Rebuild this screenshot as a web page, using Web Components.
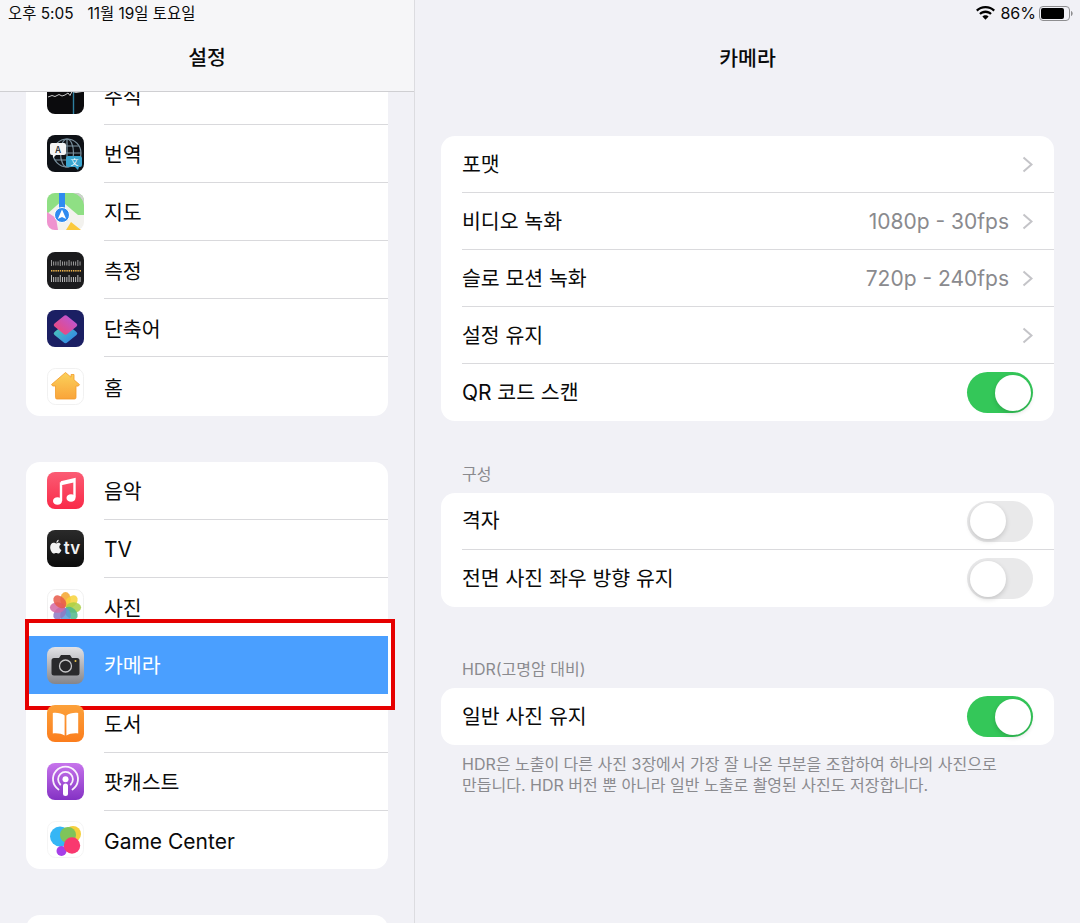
<!DOCTYPE html>
<html lang="ko">
<head>
<meta charset="utf-8">
<title>카메라 설정</title>
<style>
  html, body {
    margin: 0;
    height: 923px;
    overflow: hidden;
    background: #f1f1f6;
    font-family: Inter, "Noto Sans CJK KR", sans-serif;
    color: #0a0a0a;
  }
</style>
</head>
<body>
<ipad-layout>
  <settings-sidebar slot="side">
    <sidebar-group>
      <sidebar-row icon="stocks">주식</sidebar-row>
      <sidebar-row icon="translate">번역</sidebar-row>
      <sidebar-row icon="maps">지도</sidebar-row>
      <sidebar-row icon="measure">측정</sidebar-row>
      <sidebar-row icon="shortcuts">단축어</sidebar-row>
      <sidebar-row icon="home" last>홈</sidebar-row>
    </sidebar-group>
    <sidebar-group>
      <sidebar-row icon="music">음악</sidebar-row>
      <sidebar-row icon="tv" latin>TV</sidebar-row>
      <sidebar-row icon="photos">사진</sidebar-row>
      <sidebar-row icon="camera" selected>카메라</sidebar-row>
      <sidebar-row icon="books">도서</sidebar-row>
      <sidebar-row icon="podcasts">팟캐스트</sidebar-row>
      <sidebar-row icon="gamecenter" latin last>Game Center</sidebar-row>
    </sidebar-group>
    <sidebar-group>
      <sidebar-row icon="blank" last></sidebar-row>
    </sidebar-group>
  </settings-sidebar>

  <camera-pane slot="main">
    <settings-card>
      <settings-row chevron>포맷</settings-row>
      <settings-row value="1080p - 30fps" chevron>비디오 녹화</settings-row>
      <settings-row value="720p - 240fps" chevron>슬로 모션 녹화</settings-row>
      <settings-row chevron>설정 유지</settings-row>
      <settings-row toggle="on" last><span style="font-size:21px">QR</span> 코드 스캔</settings-row>
    </settings-card>
    <settings-card label="구성" gap="43">
      <settings-row toggle="off">격자</settings-row>
      <settings-row toggle="off" last>전면 사진 좌우 방향 유지</settings-row>
    </settings-card>
    <settings-card label="HDR(고명암 대비)" gap="52"
      note="HDR은 노출이 다른 사진 3장에서 가장 잘 나온 부분을 조합하여 하나의 사진으로 만듭니다. HDR 버전 뿐 아니라 일반 노출로 촬영된 사진도 저장합니다.">
      <settings-row toggle="on" last>일반 사진 유지</settings-row>
    </settings-card>
  </camera-pane>
</ipad-layout>

<script>
const measureTicks = () => {
    let out = '';
    for (let x = 4; x <= 33; x += 2.2) {
        const i = Math.round((x - 4) / 2.2);
        out += `<rect x="${x}" y="${i % 4 === 0 ? 8 : 9.5}" width=".9" height="${i % 4 === 0 ? 6 : 4}" fill="#a8a8a8"/>`;
        out += `<rect x="${x}" y="${i % 4 === 0 ? 23 : 25}" width=".9" height="${i % 4 === 0 ? 7 : 5}" fill="#d0d0d0"/>`;
        out += `<rect x="${x}" y="18" width="1.4" height="1.6" fill="#e9b04a"/>`;
    }
    return out;
};

const photoPetals = () => {
    const colors = ['#f4a52c', '#f7d23a', '#a9cf45', '#4fb98a', '#5b9bd8', '#8c78c4', '#d468a5', '#e85a4a'];
    return colors.map((c, i) =>
        `<ellipse cx="18.5" cy="10.5" rx="5.2" ry="7.6" fill="${c}" fill-opacity=".85" transform="rotate(${i * 45} 18.5 18.5)"/>`
    ).join('');
};

const ICONS = {
    stocks: `
      <rect width="37" height="37" rx="8" fill="#0b0b0d"/>
      <path d="M26.500 0v37" stroke="#2e7f9f" stroke-width="1.400"/>
      <path d="M1 20l4-1.500 3 1 4-2 3 1.500 3-1 3-2 2 2.500 2-4 4 1 6-1" fill="none" stroke="#e2e2e2" stroke-width=".9"/>`,
    translate: `
      <rect width="37" height="37" rx="8" fill="#0e1116"/>
      <g fill="none" stroke="#7d93a0" stroke-width="1.200">
        <circle cx="20" cy="18" r="14"/>
        <ellipse cx="20" cy="18" rx="6.500" ry="14"/>
        <path d="M20 4v28M6 18h28M8 11h24M8 25h24"/>
      </g>
      <path d="M5 8h12a2 2 0 0 1 2 2v8a2 2 0 0 1-2 2H9l-3 3v-3H5a2 2 0 0 1-2-2v-8a2 2 0 0 1 2-2z" fill="#f4f4f4"/>
      <text x="11" y="17.500" font-size="9" font-weight="500" text-anchor="middle" fill="#222">A</text>
      <path d="M21 21h12a2 2 0 0 1 2 2v7a2 2 0 0 1-2 2h-1l-1 3-3-3h-7a2 2 0 0 1-2-2v-7a2 2 0 0 1 2-2z" fill="#3aa5cf"/>
      <text x="27.500" y="30" font-size="8" text-anchor="middle" fill="#fff">文</text>`,
    maps: `
      <rect width="37" height="37" rx="8" fill="#f3f2ee"/>
      <path d="M8 0h4.500v10L0 21V8a8 8 0 0 1 8-8z" fill="#8fdf84"/>
      <path d="M18 0h11a8 8 0 0 1 8 8v14h-6L18 11z" fill="#8fdf84"/>
      <path d="M26 0h3a8 8 0 0 1 8 8v4A14 14 0 0 0 26 0z" fill="#cfcfcf"/>
      <path d="M0 19l9 6 2 12H8a8 8 0 0 1-8-8z" fill="#ef93cf"/>
      <path d="M19 37l5-8 10 8z" fill="#fbc93c"/>
      <rect x="12" y="0" width="6" height="17" fill="#2f8bf0"/>
      <circle cx="15" cy="22" r="7.500" fill="#2f8bf0" stroke="#fff" stroke-width="1"/>
      <path d="M15 16.500l4.200 9.500-4.200-2-4.200 2z" fill="#fff"/>`,
    measure: `
      <rect width="37" height="37" rx="8" fill="#1b1b1d"/>${measureTicks()}`,
    shortcuts: `
      <defs>
        <linearGradient id="s1" x1="0" y1="1" x2="1" y2="0">
          <stop offset="0" stop-color="#f4476a"/><stop offset="1" stop-color="#b458e6"/>
        </linearGradient>
        <linearGradient id="s2" x1="0" y1="0" x2="1" y2="1">
          <stop offset="0" stop-color="#4fd0b0"/><stop offset="1" stop-color="#2f7df0"/>
        </linearGradient>
      </defs>
      <rect width="37" height="37" rx="8" fill="#1b1f63"/>
      <path d="M16.500 14.700a3 3 0 0 1 4 0L29.500 22a2 2 0 0 1 0 3L20.500 32.300a3 3 0 0 1-4 0L7.500 25a2 2 0 0 1 0-3z" fill="url(#s2)"/>
      <path d="M16.500 6.200a3 3 0 0 1 4 0L29.500 13.500a2 2 0 0 1 0 3L20.500 23.800a3 3 0 0 1-4 0L7.500 16.500a2 2 0 0 1 0-3z" fill="url(#s1)"/>`,
    home: `
      <defs>
        <linearGradient id="h" x1="0" y1="0" x2="0" y2="1">
          <stop offset="0" stop-color="#fbd15a"/><stop offset="1" stop-color="#f9a43a"/>
        </linearGradient>
      </defs>
      <rect x=".5" y=".5" width="36" height="36" rx="8" fill="#fff" stroke="#f1f1f1"/>
      <path d="M18.500 4.500l5.500 4.700V6.500h3v5.300l5.500 4.800-1.200 1.500h-2.300v11.400a1.500 1.500 0 0 1-1.500 1.500H10a1.500 1.500 0 0 1-1.500-1.500V18H5.700l-1.200-1.500z" fill="url(#h)" stroke="#f39a2a" stroke-width=".8"/>`,
    music: `
      <defs>
        <linearGradient id="m" x1="0" y1="0" x2="0" y2="1">
          <stop offset="0" stop-color="#fb5c74"/><stop offset="1" stop-color="#f92a48"/>
        </linearGradient>
      </defs>
      <rect width="37" height="37" rx="8" fill="url(#m)"/>
      <path d="M14 10.300l13.500-3v18.200" fill="none" stroke="#fff" stroke-width="2.400"/>
      <path d="M14 10.300v18.700M14 12l13.500-3" fill="none" stroke="#fff" stroke-width="2.400"/>
      <ellipse cx="10.500" cy="29" rx="4.500" ry="3.800" fill="#fff"/>
      <ellipse cx="24" cy="26" rx="4.500" ry="3.800" fill="#fff"/>`,
    tv: `
      <defs>
        <linearGradient id="t" x1="0" y1="0" x2="0" y2="1">
          <stop offset="0" stop-color="#2a2a2a"/><stop offset="1" stop-color="#0c0c0c"/>
        </linearGradient>
      </defs>
      <rect width="37" height="37" rx="8" fill="url(#t)"/>
      <g transform="translate(-1.500 -3.200) scale(1.200)">
        <path d="M11.300 13.300c-.9 0-1.500.6-2.300.6s-1.300-.6-2.200-.6c-1.600 0-2.900 1.500-2.900 3.700 0 2.600 1.700 5.300 3.100 5.300.7 0 1-.4 1.900-.4s1.200.4 1.900.4c1 0 2-1.500 2.500-2.900-2.200-1-2.300-3.800-.4-4.800-.5-.8-1.500-1.300-1.600-1.300z" fill="#f2f2f2"/>
        <path d="M9 13.200c0-1.200.9-2.300 2-2.500.1 1.300-.9 2.400-2 2.500z" fill="#f2f2f2"/>
      </g>
      <text x="25" y="24" font-size="17" font-weight="600" text-anchor="middle" fill="#f2f2f2" font-family="Inter, sans-serif">tv</text>`,
    photos: `
      <rect x=".5" y=".5" width="36" height="36" rx="8" fill="#fff" stroke="#f1f1f1"/>${photoPetals()}`,
    camera: `
      <defs>
        <linearGradient id="c" x1="0" y1="0" x2="0" y2="1">
          <stop offset="0" stop-color="#e3e3e6"/><stop offset="1" stop-color="#85858a"/>
        </linearGradient>
      </defs>
      <rect width="37" height="37" rx="8" fill="url(#c)"/>
      <path d="M7 11h5l2-3h9l2 3h5a2.500 2.500 0 0 1 2.500 2.500V26a2.500 2.500 0 0 1-2.500 2.500H7A2.500 2.500 0 0 1 4.500 26V13.500A2.500 2.500 0 0 1 7 11z" fill="#2a2a2c"/>
      <circle cx="18.500" cy="19" r="6" fill="#27272a" stroke="#c6c6c8" stroke-width="1.300"/>
      <circle cx="28.500" cy="14" r="1" fill="#e9c34a"/>`,
    books: `
      <defs>
        <linearGradient id="b" x1="0" y1="0" x2="0" y2="1">
          <stop offset="0" stop-color="#fca13a"/><stop offset="1" stop-color="#fb7d1d"/>
        </linearGradient>
      </defs>
      <rect width="37" height="37" rx="8" fill="url(#b)"/>
      <path d="M17.600 10.500C15 8.300 10 7.500 5.800 8v20.500c4.500-.5 8.800.2 11.800 2z" fill="#fff"/>
      <path d="M19.400 10.500C22 8.300 27 7.500 31.200 8v20.500c-4.500-.5-8.800.2-11.800 2z" fill="#fff"/>`,
    podcasts: `
      <defs>
        <linearGradient id="p" x1="0" y1="0" x2="0" y2="1">
          <stop offset="0" stop-color="#c774ec"/><stop offset="1" stop-color="#8432c4"/>
        </linearGradient>
      </defs>
      <rect width="37" height="37" rx="8" fill="url(#p)"/>
      <g fill="none" stroke="#fff" stroke-width="1.800" stroke-linecap="round" opacity=".92">
        <path d="M11.500 26.500a12.500 12.500 0 1 1 14 0"/>
        <path d="M13.300 21.500a7.400 7.400 0 1 1 10.400 0"/>
      </g>
      <circle cx="18.500" cy="16.300" r="3" fill="#fff"/>
      <rect x="16" y="20.500" width="5" height="12.500" rx="2.500" fill="#fff"/>`,
    gamecenter: `
      <rect x=".5" y=".5" width="36" height="36" rx="8" fill="#fff" stroke="#f5f5f5"/>
      <circle cx="13" cy="15.500" r="10" fill="#35b6f5"/>
      <circle cx="26" cy="13" r="8" fill="#f5cf3c"/>
      <circle cx="14.500" cy="30" r="5" fill="#a63fe8"/>
      <circle cx="21" cy="14" r="8" fill="#7fc45a"/>
      <circle cx="25" cy="24.500" r="8.200" fill="#f9386f"/>`,
    blank: `<rect x=".5" y=".5" width="36" height="36" rx="8" fill="#fff"/>`,
};

class AppIcon extends HTMLElement {
    constructor() {
        super();
        this.attachShadow({ mode: 'open' });
    }

    connectedCallback() {
        const name = this.getAttribute('name');
        this.shadowRoot.innerHTML = `
      <style>
        :host { display: block; width: 37px; height: 37px; flex: none; }
        svg { display: block; font-family: "Noto Sans CJK KR", sans-serif; }
      </style>
      <svg width="37" height="37" viewBox="0 0 37 37">${ICONS[name] || ''}</svg>
    `;
    }
}

class IpadLayout extends HTMLElement {
    constructor() {
        super();
        this.attachShadow({ mode: 'open' });
        this.shadowRoot.innerHTML = `
      <style>
        :host { display: grid; grid-template-columns: 415px 665px; height: 923px; }
      </style>
      <slot name="side"></slot>
      <slot name="main"></slot>
    `;
    }
}

class SettingsSidebar extends HTMLElement {
    constructor() {
        super();
        this.attachShadow({ mode: 'open' });
        this.shadowRoot.innerHTML = `
      <style>
        :host {
          display: flex;
          flex-direction: column;
          height: 923px;
          overflow: hidden;
          border-right: 1px solid #dcdce0;
          box-sizing: border-box;
        }
        header {
          flex: none;
          height: 92px;
          box-sizing: border-box;
          background: #f6f6f8;
          border-bottom: 1px solid #cfcfd2;
          position: relative;
          z-index: 2;
        }
        .status {
          display: flex;
          gap: 14px;
          padding: 4px 0 0 8px;
          font-size: 15.4px;
          line-height: 20px;
        }
        h1 {
          margin: 19px 0 0;
          font-size: 20.5px;
          line-height: 30px;
          font-weight: 500;
          text-align: center;
        }
        .list { flex: 1; min-height: 0; margin-top: -25.5px; padding: 0 26px; display: flex; flex-direction: column; gap: 46px; }
      </style>
      <header>
        <div class="status"><span>오후 5:05</span><span>11월 19일 토요일</span></div>
        <h1>설정</h1>
      </header>
      <div class="list"><slot></slot></div>
    `;
    }
}

class SidebarGroup extends HTMLElement {
    constructor() {
        super();
        this.attachShadow({ mode: 'open' });
        this.shadowRoot.innerHTML = `
      <style>
        :host { display: block; flex: none; background: #fff; border-radius: 14px; }
      </style>
      <slot></slot>
    `;
    }
}

class SidebarRow extends HTMLElement {
    constructor() {
        super();
        this.attachShadow({ mode: 'open' });
    }

    connectedCallback() {
        const icon = this.getAttribute('icon');
        this.shadowRoot.innerHTML = `
      <style>
        :host {
          display: block;
          height: 58.2px;
          position: relative;
        }
        .row { display: flex; align-items: center; height: 100%; padding-left: 21px; position: relative; z-index: 1; }
        .label {
          flex: 1;
          height: 100%;
          margin-left: 20px;
          display: flex;
          align-items: center;
          font-size: 20.5px;
          box-sizing: border-box;
          border-bottom: 1px solid #d9d9dc;
        }
        :host([last]) .label { border-bottom: 0; }
        :host([latin]) .label { font-size: 21px; padding-top: 3px; }

        /* 빨간 강조 박스 */
        :host([selected]) { z-index: 1; }
        :host([selected]) .row { margin-left: 3px; padding-left: 18px; background: #4a9fff; }
        :host([selected]) .label { color: #fff; border-bottom: 0; padding-bottom: 2px; }
        :host([selected])::before {
          content: "";
          position: absolute;
          top: -17px;
          bottom: -16px;
          left: -1px;
          right: -7px;
          background: #fff;
          border: 4px solid #e60000;
        }
      </style>
      <div class="row">
        <app-icon name="${icon}"></app-icon>
        <div class="label"><slot></slot></div>
      </div>
    `;
    }
}

class CameraPane extends HTMLElement {
    constructor() {
        super();
        this.attachShadow({ mode: 'open' });
        this.shadowRoot.innerHTML = `
      <style>
        :host { display: block; padding: 0 26px; }
        .status {
          display: flex;
          justify-content: flex-end;
          align-items: center;
          gap: 5px;
          height: 26px;
          margin-right: -19px;
          font-size: 16px;
        }
        .status span { margin: 0 -2px 0 0; }
        h2 {
          margin: 18px 0 0;
          font-size: 20.5px;
          line-height: 30px;
          font-weight: 500;
          text-align: center;
        }
        .content { padding-top: 62px; }
      </style>
      <div class="status">
        <svg width="19" height="14" viewBox="0 0 19 14">
          <path d="M9.500 0C5.800 0 2.500 1.400 0 3.800l1.600 1.700C3.600 3.500 6.400 2.300 9.500 2.300s5.900 1.200 7.900 3.200L19 3.800C16.500 1.400 13.200 0 9.500 0z"/>
          <path d="M9.500 4.600c-2.400 0-4.600.9-6.300 2.600l1.600 1.600c1.200-1.200 2.900-1.900 4.700-1.900s3.500.7 4.700 1.900l1.600-1.600c-1.700-1.700-3.900-2.600-6.300-2.600z"/>
          <path d="M9.500 9.200c-1.200 0-2.300.5-3.100 1.300l3.100 3.200 3.100-3.200c-.8-.8-1.900-1.300-3.100-1.300z"/>
        </svg>
        <span>86%</span>
        <svg width="34" height="15" viewBox="0 0 34 15">
          <rect x=".5" y=".5" width="30" height="14" rx="3.500" fill="none" stroke="#8e8e90"/>
          <rect x="2" y="2" width="23" height="11" rx="2" fill="#000"/>
          <path d="M32 5c1 .3 1.700 1.300 1.700 2.500S33 9.700 32 10z" fill="#8e8e90"/>
        </svg>
      </div>
      <h2>카메라</h2>
      <div class="content"><slot></slot></div>
    `;
    }
}

class SettingsCard extends HTMLElement {
    constructor() {
        super();
        this.attachShadow({ mode: 'open' });
    }

    connectedCallback() {
        const label = this.getAttribute('label');
        const note = this.getAttribute('note');
        const gap = this.getAttribute('gap') || 0;
        this.shadowRoot.innerHTML = `
      <style>
        :host { display: block; }
        .label, .note { color: #8a8a8e; font-size: 16px; padding-left: 21px; }
        .label { line-height: 20px; margin: ${gap}px 0 9px; }
        .note { line-height: 21px; padding: 9px 40px 0 21px; }
        .card { background: #fff; border-radius: 14px; }
      </style>
      ${label ? `<div class="label">${label}</div>` : ''}
      <div class="card"><slot></slot></div>
      ${note ? `<div class="note">${note}</div>` : ''}
    `;
    }
}

class SettingsRow extends HTMLElement {
    constructor() {
        super();
        this.attachShadow({ mode: 'open' });
    }

    connectedCallback() {
        const value = this.getAttribute('value');
        const toggle = this.getAttribute('toggle');
        this.shadowRoot.innerHTML = `
      <style>
        :host { display: block; height: 57px; padding-left: 21px; }
        .row {
          display: flex;
          align-items: center;
          height: 100%;
          padding-right: 21px;
          box-sizing: border-box;
          border-bottom: 1px solid #dadadd;
          font-size: 20.5px;
        }
        :host([last]) .row { border-bottom: 0; }
        .text { flex: 1; padding-bottom: 2px; }
        :host([toggle]) .text { padding-bottom: 4px; }
        .value { color: #8a8a8e; font-size: 21px; }
        svg { margin: 0 .5px 0 12.500px; display: block; }
      </style>
      <div class="row">
        <div class="text"><slot></slot></div>
        ${value ? `<span class="value">${value}</span>` : ''}
        ${this.hasAttribute('chevron') ? `
          <svg width="11" height="17" viewBox="0 0 11 17">
            <path d="M1.500 1.500l8 7-8 7" fill="none" stroke="#c4c4c8" stroke-width="2"/>
          </svg>` : ''}
        ${toggle ? `<toggle-switch ${toggle === 'on' ? 'checked' : ''}></toggle-switch>` : ''}
      </div>
    `;
    }
}

class ToggleSwitch extends HTMLElement {
    constructor() {
        super();
        this.attachShadow({ mode: 'open' });
        this.shadowRoot.innerHTML = `
      <style>
        :host {
          display: flex;
          align-items: center;
          width: 66px;
          height: 41px;
          padding: 2.5px;
          box-sizing: border-box;
          border-radius: 21px;
          background: #e9e9ea;
        }
        :host([checked]) { background: #34c759; justify-content: flex-end; }
        .knob {
          width: 36px;
          height: 36px;
          border-radius: 50%;
          background: #fff;
          box-shadow: 0 2px 5px rgba(0, 0, 0, .16);
        }
      </style>
      <div class="knob"></div>
    `;
    }
}

customElements.define('app-icon', AppIcon);
customElements.define('ipad-layout', IpadLayout);
customElements.define('settings-sidebar', SettingsSidebar);
customElements.define('sidebar-group', SidebarGroup);
customElements.define('sidebar-row', SidebarRow);
customElements.define('camera-pane', CameraPane);
customElements.define('settings-card', SettingsCard);
customElements.define('settings-row', SettingsRow);
customElements.define('toggle-switch', ToggleSwitch);
</script>
</body>
</html>
